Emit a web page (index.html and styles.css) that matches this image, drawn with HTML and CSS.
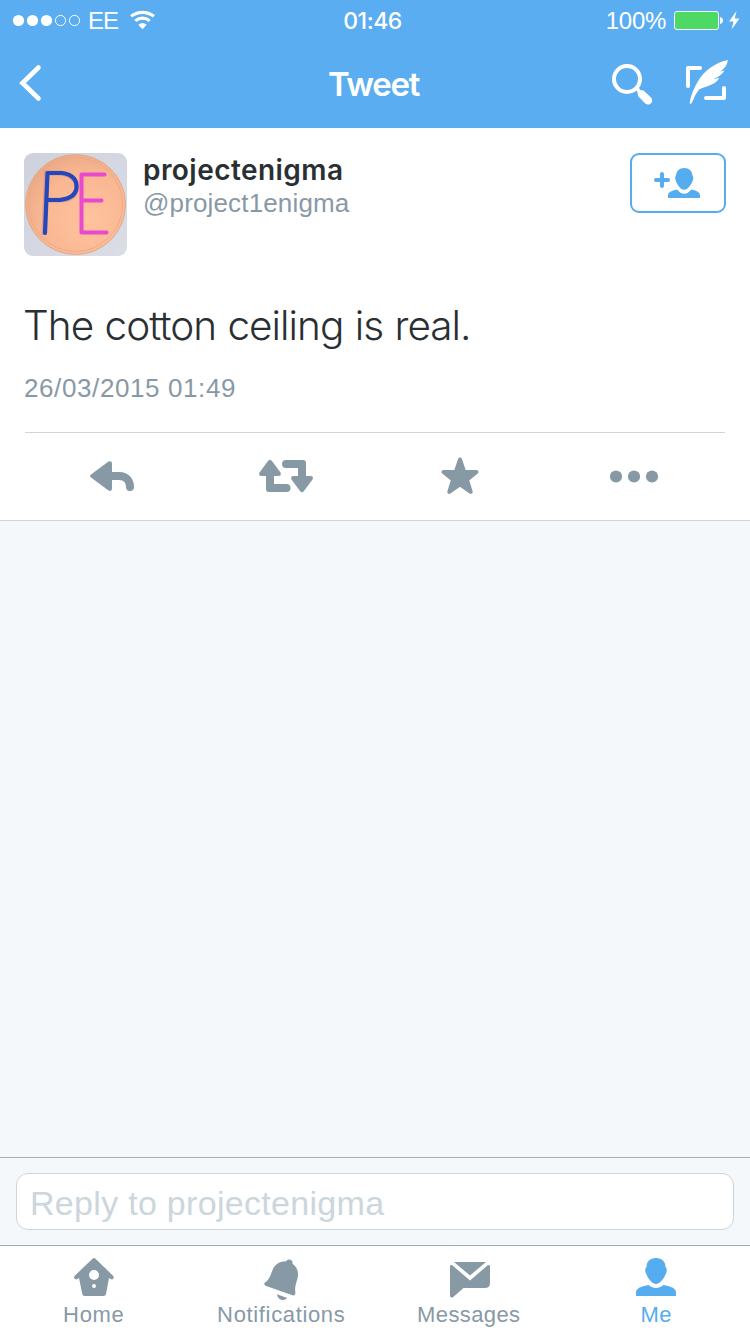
FILE: index.html
```html
<!DOCTYPE html>
<html lang="en">
<head>
<meta charset="utf-8">
<title>Tweet</title>
<link rel="stylesheet" href="styles.css">
</head>
<body>
<div class="screen">
  <header class="header">
    <div class="status">
      <div class="status-left">
        <svg class="dots" width="70" height="14" viewBox="12 13 70 14"><g fill="#fff"><circle cx="18.5" cy="20.5" r="5.6"/><circle cx="32.5" cy="20.5" r="5.6"/><circle cx="46.5" cy="20.5" r="5.6"/></g><g fill="none" stroke="#fff"><circle cx="60.5" cy="20.5" r="5.1"/><circle cx="74.5" cy="20.5" r="5.1"/></g></svg>
        <span class="carrier">EE</span>
        <svg class="wifi" width="26" height="20" viewBox="130 10 26 20"><g fill="none" stroke="#fff" stroke-width="3.2"><path d="M131.1 16.3Q136.300 12.400 142.500 12.400T153.900 16.300"/><path d="M135.300 20.900Q138.500 18.200 142.500 18.200T149.700 20.900"/></g><path fill="#fff" d="M138.300 24.800Q142.500 21.200 146.700 24.800L142.500 29.200Z"/></svg>
      </div>
      <span class="clock">01:46</span>
      <div class="status-right">
        <span class="percent">100%</span>
        <svg width="50" height="20" viewBox="674 10 50 20"><rect x="674.5" y="11.500" width="44" height="18" rx="2.500" fill="#4cd964" stroke="#fff"/><path fill="#fff" d="M720 17q3 .6 3 3.500t-3 3.500Z"/></svg>
        <svg width="12" height="20" viewBox="728 10 12 20"><path fill="#fff" d="M736.500 11L729 21.500H733.500L731.500 29.500L739.500 18.500H734.700Z"/></svg>
      </div>
    </div>
    <nav class="nav">
      <svg width="24" height="38" viewBox="19 64 24 38"><path d="M38.500 67.500L22.500 83L38.500 98.500" fill="none" stroke="#fff" stroke-width="4.600" stroke-linecap="round" stroke-linejoin="miter"/></svg>
      <h1 class="title">Tweet</h1>
      <div class="nav-icons">
        <svg width="42" height="46" viewBox="611 60 42 46"><circle cx="627" cy="79" r="13" fill="none" stroke="#fff" stroke-width="4"/><path fill="#fff" d="M635.500 89.500L638.500 86.500L640 90L643.500 90.500L650.800 97.300A4 4 0 0 1 645.300 103.500L638 96L637.500 92Z"/></svg>
        <svg width="43" height="46" viewBox="685 60 43 46"><g fill="none" stroke="#fff" stroke-width="4" stroke-linecap="round" stroke-linejoin="round"><path d="M700 68H688V86"/><path d="M706 98H724V88"/></g><path fill="#fff" d="M728 60C717 62 704 70 697.500 82C693 90 690 98 689.800 103.500Q691 105 692.500 101.500Q695 94.500 699 89.500C706 86 716 85 719.200 78L713 79Q721 76.500 724.500 70.500L719.500 71.500Q726.500 68.500 728 60Z"/></svg>
      </div>
    </nav>
  </header>

  <main class="tweet">
    <div class="author">
      <svg class="avatar" width="103" height="103" viewBox="0 0 103 103">
        <defs>
          <linearGradient id="wall" x1="0" y1="0" x2="1" y2="1"><stop offset="0" stop-color="#ced2dd"/><stop offset="1" stop-color="#dbdde6"/></linearGradient>
          <radialGradient id="disc" cx=".62" cy=".65" r=".75"><stop offset="0" stop-color="#ffc39e"/><stop offset=".6" stop-color="#f9b792"/><stop offset="1" stop-color="#e9a583"/></radialGradient>
        </defs>
        <rect width="103" height="103" fill="url(#wall)"/>
        <circle cx="51.500" cy="51.500" r="50" fill="url(#disc)" stroke="#e2ab88" stroke-width="1"/>
        <circle cx="51.500" cy="51.500" r="47" fill="none" stroke="#e8aa86" stroke-width=".8"/>
        <path d="M20 82L22.500 20H34C58 20 60 47 36 47H25" fill="none" stroke="#c68287" stroke-width="5" opacity=".5"/>
        <path d="M21 80L23.500 20H38Q52.500 22 52.500 33.500T36 47H25" fill="none" stroke="#2448bb" stroke-width="4.200" stroke-linejoin="round" stroke-linecap="round"/>
        <path d="M80.500 21.500H57.500V79.500H82.500M58 47.500H77.500" fill="none" stroke="#e949ce" stroke-width="4" stroke-linejoin="round" stroke-linecap="round"/>
      </svg>
      <div class="names">
        <div class="name">projectenigma</div>
        <div class="handle">@project1enigma</div>
      </div>
      <button class="follow" aria-label="Follow">
        <svg width="48" height="32" viewBox="654 167 48 32"><path d="M662 174V186M656 180H668" stroke="#55acee" stroke-width="4" stroke-linecap="round"/><path fill="#55acee" d="M684.200 168C679.500 168 676.300 171 676 175.500Q674.500 177 675.500 180C677 184.500 680.500 189.800 684.200 189.800S691.500 184.500 693 180Q694 177 692.500 175.500C692.200 171 689 168 684.200 168ZM677 189.500Q684.200 198 691.500 189.500Q700 191 700 195V198H668V195Q668 191 677 189.500Z"/></svg>
      </button>
    </div>
    <p class="text">The cotton ceiling is real.</p>
    <p class="date">26/03/2015 01:49</p>
    <div class="actions">
      <svg width="46" height="34" viewBox="89 460 46 34"><path fill="#8899a6" d="M91 474.500L108.500 461.500Q112 460.200 112 463.500V472H119C129 472 134 479 134 487A4 4 0 0 1 126 487Q126 480 119 480H112V488.500Q112 492 108.500 490.500L91 477.500Q89 476 91 474.500Z"/></svg>
      <svg class="retweet" width="54" height="34" viewBox="259 460 54 34"><g fill="#8899a6"><path d="M268 461Q270 458.500 272 461L280.500 472.500Q281.800 476 278.500 476H274V484H286.500A4 4 0 0 1 286.500 492H269Q266 492 266 489V476H261.500Q258 476 259.500 472.500Z"/><path d="M286 460H303Q306 460 306 463V476H310.500Q314 476 312.500 479.500L304 491Q302 493.500 300 491L291.500 479.500Q290 476 293.500 476H298V468H286A4 4 0 0 1 286 460Z"/></g></svg>
      <svg class="favorite" width="38" height="40" viewBox="441 457 38 40"><path fill="#8899a6" stroke="#8899a6" stroke-width="4" stroke-linejoin="round" d="M460 459.500L464.200 472H476.500L467 479.800L470.700 491.800L460 484.300L449.300 491.800L453 479.800L443.500 472H455.800Z"/></svg>
      <svg class="more" width="50" height="14" viewBox="609 470 50 14"><g fill="#8899a6"><circle cx="616" cy="476.500" r="6.100"/><circle cx="634" cy="476.500" r="6.100"/><circle cx="652" cy="476.500" r="6.100"/></g></svg>
    </div>
  </main>

  <div class="thread"></div>

  <div class="reply"><div class="field"><span class="placeholder">Reply to projectenigma</span></div></div>

  <footer class="tabs">
    <div class="tab">
      <svg width="42" height="44" viewBox="73 1257 42 44"><path fill="#8899a6" fill-rule="evenodd" d="M92.500 1258.700Q94 1257.300 95.500 1258.700L113.500 1276.200Q114.300 1279.500 111.500 1279.500L109 1278L106 1294Q105.600 1296 103.600 1296H84.600Q82.600 1296 82.300 1294L79 1278L76.500 1279.500Q73.500 1279.500 74.300 1276.200ZM94 1270A5 5 0 1 0 94 1280A5 5 0 1 0 94 1270ZM94 1284A2 2 0 1 0 94 1288A2 2 0 1 0 94 1284Z"/></svg>
      <span class="label wide">Home</span>
    </div>
    <div class="tab">
      <svg width="42" height="44" viewBox="260 1257 42 44"><g fill="#8899a6"><path d="M286.300 1261.200Q287 1259 289.800 1259.500Q293.300 1260.500 292.500 1263.700C297.500 1267 299 1273 297.600 1278C296 1284 294.500 1287 295.400 1293Q295.300 1296 292.500 1295.300L265.500 1285.700Q263.200 1284.500 265 1282.500C270 1279 270.500 1275 272.500 1270C275 1264 280 1261 286.300 1261.200Z"/><path d="M277 1294.200L287.200 1298Q285.500 1300.200 282 1300Q277.500 1299 277 1294.200Z"/></g></svg>
      <span class="label wide">Notifications</span>
    </div>
    <div class="tab">
      <svg width="42" height="44" viewBox="448 1257 42 44"><g fill="#8899a6"><path d="M454 1262H486L470 1275.500Z"/><path d="M450 1265.500L452 1265L470 1280.500L488 1265L490 1265.500V1283Q490 1288 485 1288H463.500L453 1297.200Q450 1298.300 450 1295.500Z"/></g></svg>
      <span class="label messages">Messages</span>
    </div>
    <div class="tab active">
      <svg width="42" height="44" viewBox="635 1257 42 44"><path fill="#55acee" d="M656 1258C650 1258 646.600 1261.500 646.500 1267Q644.300 1269 645.800 1273C648 1278.500 652 1284 656 1284S664 1278.500 666.200 1273Q667.700 1269 665.500 1267C665.400 1261.500 662 1258 656 1258ZM648.500 1285Q656 1291.500 663.500 1285Q676 1287 676 1292V1296H636V1292Q636 1287 648.500 1285Z"/></svg>
      <span class="label messages">Me</span>
    </div>
  </footer>
</div>
</body>
</html>
```
FILE: styles.css
```css
* { box-sizing: border-box; }
body { margin: 0; font-family: "Liberation Sans", Arial, sans-serif; background: #fff; }
svg { display: block; flex: none; }
h1, p { margin: 0; font-weight: normal; }
span, .name, .handle, .text, .date, .title { white-space: nowrap; }
.screen { width: 750px; height: 1334px; display: flex; flex-direction: column; overflow: hidden; }

.header { height: 128px; background: #5aadf0; color: #fff; flex: none; }
.status { height: 40px; display: grid; grid-template-columns: 1fr auto 1fr; align-items: center; padding: 0 10px 0 12px; font-size: 24px; line-height: 38px; }
.status-left { display: flex; align-items: center; }
.carrier { margin-left: 6px; width: 30px; letter-spacing: -1px; padding-top: 2px; }
.wifi { margin-left: 12px; }
.clock { font-family: Inter, sans-serif; font-weight: 500; font-size: 23px; letter-spacing: -0.5px; padding-top: 2px; margin-right: 7px; }
.status-right { display: flex; align-items: center; justify-content: flex-end; }
.status-right svg + svg { margin-left: 4px; }
.percent { margin-right: 8px; padding-top: 2px; letter-spacing: -0.3px; }
.nav { height: 86px; display: grid; grid-template-columns: 1fr auto 1fr; align-items: center; padding: 0 22px 0 19px; }
.title { font-family: Inter, sans-serif; font-weight: 600; font-size: 33px; line-height: 40px; letter-spacing: -1.3px; padding-top: 1px; }
.nav-icons { display: flex; justify-content: flex-end; gap: 32px; }

.tweet { height: 393px; flex: none; padding: 25px 24px 0; border-bottom: 1px solid #ccd6dd; }
.author { display: flex; height: 103px; }
.avatar { border-radius: 9px; }
.names { flex: 1; padding-left: 16px; }
.name { font-family: Inter, sans-serif; font-weight: 600; font-size: 28px; line-height: 35px; letter-spacing: 0.45px; color: #292f33; }
.handle { font-size: 26px; line-height: 30px; letter-spacing: 0.15px; color: #8899a6; }
.follow { width: 96px; height: 60px; padding: 0; border: 2px solid #55acee; border-radius: 9px; background: #fff; display: flex; align-items: center; justify-content: center; }
.text { margin: 46px 0 0 -1px; font-family: Inter, sans-serif; font-weight: 300; font-size: 40.5px; line-height: 48px; letter-spacing: -0.98px; word-spacing: 1px; color: #292f33; }
.date { margin-top: 22px; font-size: 26px; line-height: 32px; letter-spacing: 0.6px; color: #8899a6; }
.actions { height: 88px; margin: 28px 1px 0; border-top: 1px solid #ccd6dd; display: flex; align-items: center; padding-left: 64px; }
.retweet { margin-left: 124px; }
.favorite { margin-left: 128px; }
.more { margin-left: 130px; }

.thread { flex: 1; background: #f4f8fb; }
.reply { height: 89px; flex: none; padding: 15px 16px; background: #f4f8fb; border-top: 1px solid #a6adb2; border-bottom: 1px solid #a6a9af; }
.field { height: 57px; border: 1px solid #ccd6dd; border-radius: 12px; background: #fff; padding: 1px 13px 0; line-height: 56px; font-size: 34px; letter-spacing: 0.3px; color: #ccd6dd; }
.tabs { height: 88px; flex: none; display: flex; }
.tab { width: 187.5px; display: flex; flex-direction: column; align-items: center; padding-top: 11px; color: #8899a6; }
.label { font-size: 22px; line-height: 28px; }
.wide { letter-spacing: 0.65px; }
.messages { letter-spacing: 0.4px; }
.active { color: #55acee; }
```
